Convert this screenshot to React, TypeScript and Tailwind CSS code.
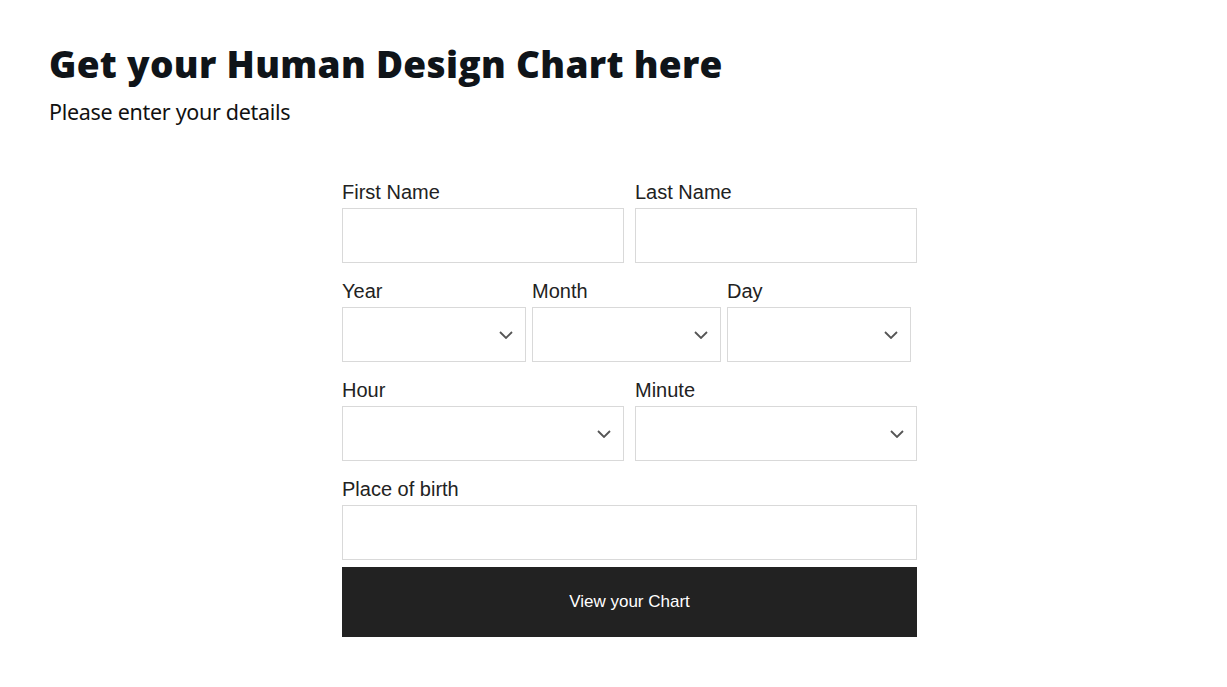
import React from 'react';

const Chevron: React.FC = () => (
  <svg width="14" height="8" viewBox="0 0 14 8" fill="none" className="pointer-events-none absolute right-[13px] top-1/2 -translate-y-1/2">
    <path d="M1 1l6 6 6-6" stroke="#555" strokeWidth="1.8" />
  </svg>
);

interface FieldProps {
  label: string;
  width: string;
  select?: boolean;
}

const Field: React.FC<FieldProps> = ({ label, width, select }) => (
  <div className={`flex flex-col ${width}`}>
    <label className="text-[20px] leading-[25px] text-[#222] h-[28px]">{label}</label>
    <div className="relative">
      {select ? (
        <select className="appearance-none w-full h-[55px] border border-[#d9d9d9] bg-white px-3 outline-none" />
      ) : (
        <input type="text" className="w-full h-[55px] border border-[#d9d9d9] bg-white px-3 outline-none" />
      )}
      {select && <Chevron />}
    </div>
  </div>
);

export default function App() {
  return (
    <div className="min-h-screen bg-white px-[49px] pt-[38px]" style={{ fontFamily: '"Liberation Sans", Arial, sans-serif' }}>
      <h1 className="text-[37px] leading-[52px] font-extrabold text-[#0f1419] tracking-[0.3px]" style={{ fontFamily: '"Open Sans", "Noto Sans", sans-serif' }}>
        Get your Human Design Chart here
      </h1>
      <p className="text-[21.5px] leading-[30px] text-[#111] mt-[7px] tracking-[-0.3px]" style={{ fontFamily: '"Noto Sans", "Open Sans", sans-serif' }}>
        Please enter your details
      </p>

      <form className="ml-[293px] mt-[53px] w-[575px] flex flex-col" onSubmit={e => e.preventDefault()}>
        <div className="flex gap-[11px]">
          <Field label="First Name" width="w-[282px]" />
          <Field label="Last Name" width="w-[282px]" />
        </div>
        <div className="flex gap-[6px] mt-[16px]">
          <Field label="Year" width="w-[184px]" select />
          <Field label="Month" width="w-[189px]" select />
          <Field label="Day" width="w-[184px]" select />
        </div>
        <div className="flex gap-[11px] mt-[16px]">
          <Field label="Hour" width="w-[282px]" select />
          <Field label="Minute" width="w-[282px]" select />
        </div>
        <div className="mt-[16px]">
          <Field label="Place of birth" width="w-[575px]" />
        </div>
        <button type="submit" className="mt-[7px] h-[70px] w-full bg-[#222] text-white text-[17px]">
          View your Chart
        </button>
      </form>
    </div>
  );
}
